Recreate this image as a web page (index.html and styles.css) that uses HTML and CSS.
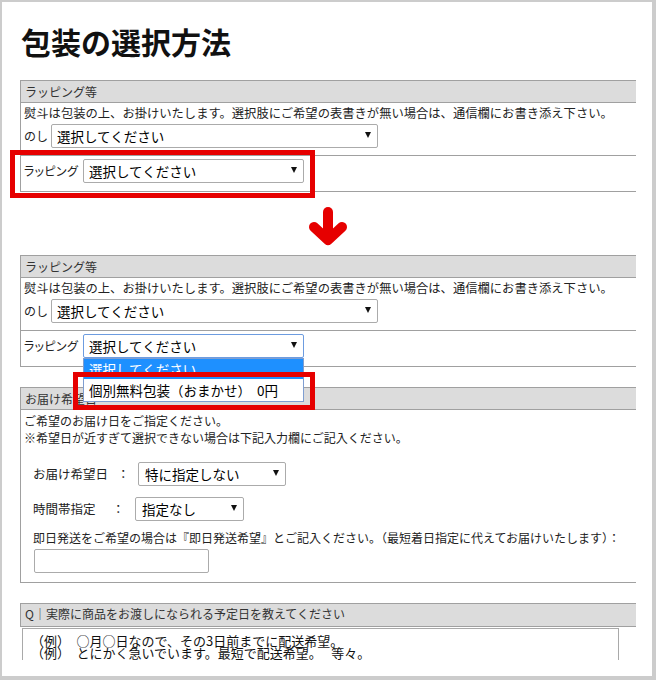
FILE: index.html
```html
<!DOCTYPE html>
<html lang="ja">
<head>
<meta charset="utf-8">
<title>包装の選択方法</title>
<link rel="stylesheet" href="styles.css">
</head>
<body>
<div class="frame">
  <div class="viewport">
    <h1 class="title">包装の選択方法</h1>

    <section class="box">
      <div class="box-head">ラッピング等</div>
      <div class="row row-noshi">
        <p class="note">熨斗は包装の上、お掛けいたします。選択肢にご希望の表書きが無い場合は、通信欄にお書き添え下さい。</p>
        <div class="field field-noshi">
          <span class="field-label label-noshi">のし</span>
          <div class="select select-noshi"><span class="select-value">選択してください</span></div>
        </div>
      </div>
      <div class="row row-wrap">
        <div class="field">
          <span class="field-label label-wrap">ラッピング</span>
          <div class="select select-wrap"><span class="select-value">選択してください</span></div>
        </div>
      </div>
    </section>

    <div class="arrow">
      <svg width="38" height="40" viewBox="0 0 38 40" aria-hidden="true">
        <path d="M19 6 V30" fill="none" stroke="#e60000" stroke-width="10" stroke-linecap="round"/>
        <path d="M5 21 L19 34 L33 21" fill="none" stroke="#e60000" stroke-width="10" stroke-linecap="round" stroke-linejoin="round"/>
      </svg>
    </div>

    <section class="box box-second">
      <div class="box-head">ラッピング等</div>
      <div class="row row-noshi">
        <p class="note">熨斗は包装の上、お掛けいたします。選択肢にご希望の表書きが無い場合は、通信欄にお書き添え下さい。</p>
        <div class="field field-noshi">
          <span class="field-label label-noshi">のし</span>
          <div class="select select-noshi"><span class="select-value">選択してください</span></div>
        </div>
      </div>
      <div class="row row-wrap">
        <div class="field">
          <span class="field-label label-wrap">ラッピング</span>
          <div class="select select-wrap is-open">
            <span class="select-value">選択してください</span>
            <div class="listbox">
              <div class="option is-selected">選択してください</div>
              <div class="option">個別無料包装（おまかせ）&nbsp;&nbsp;0円</div>
            </div>
          </div>
        </div>
      </div>
    </section>

    <section class="box box-delivery">
      <div class="box-head">お届け希望日</div>
      <div class="row row-delivery">
        <p class="intro">ご希望のお届け日をご指定ください。</p>
        <p class="intro">※希望日が近すぎて選択できない場合は下記入力欄にご記入ください。</p>
        <div class="field field-date">
          <span class="field-label label-date">お届け希望日</span>
          <span class="colon">：</span>
          <div class="select select-date"><span class="select-value">特に指定しない</span></div>
        </div>
        <div class="field field-time">
          <span class="field-label label-time">時間帯指定</span>
          <span class="colon">：</span>
          <div class="select select-time"><span class="select-value">指定なし</span></div>
        </div>
        <p class="express">即日発送をご希望の場合は『即日発送希望』とご記入ください。（最短着日指定に代えてお届けいたします）：</p>
        <input class="text-input" type="text" aria-label="即日発送希望">
      </div>
    </section>

    <section class="box box-q">
      <div class="box-head box-head-q">Q｜実際に商品をお渡しになられる予定日を教えてください</div>
      <textarea class="answer" aria-label="予定日">（例）　○月○日なので、その3日前までに配送希望。
（例）　とにかく急いでいます。最短で配送希望。　 等々。</textarea>
    </section>

    <div class="mark mark-1"></div>
    <div class="mark mark-2"></div>
  </div>
</div>
</body>
</html>
```

FILE: styles.css
```css
* {
  box-sizing: border-box;
}

html,
body {
  margin: 0;
  padding: 0;
  background: #ffffff;
}

body {
  font-family: "Noto Sans CJK JP", "Noto Sans", sans-serif;
  color: #222222;
}

.frame {
  width: 656px;
  height: 680px;
  border-style: solid;
  border-color: #cccccc;
  border-width: 2px 4px 4px 2px;
  padding-bottom: 16px;
  background: #ffffff;
}

.viewport {
  position: relative;
  height: 658px;
  overflow: hidden;
  padding: 19px 16px 0 18px;
}

.title {
  margin: 0;
  height: 40px;
  padding-left: 1px;
  font-size: 30px;
  line-height: 40px;
  font-weight: 700;
  color: #111111;
}

.box {
  margin-top: 19px;
  border-top: 1px solid #a0a0a0;
  border-bottom: 1px solid #a0a0a0;
  border-left: 1px solid #a0a0a0;
}

.box-second {
  margin-top: 0;
}

.box-delivery {
  margin-top: 20px;
}

.box-head {
  height: 22px;
  padding-left: 4px;
  border-bottom: 1px solid #a0a0a0;
  background: #dcdcdc;
  font-size: 12px;
  line-height: 21px;
  color: #333333;
  white-space: nowrap;
}

.row-noshi {
  height: 53px;
  padding: 2px 0 0 3px;
  border-bottom: 1px solid #a0a0a0;
}

.row-wrap {
  padding: 3px 0 8px 3px;
}

.note {
  margin: 0;
  font-size: 12.3px;
  line-height: 16px;
  white-space: nowrap;
}

.field {
  display: flex;
  align-items: center;
}

.field-noshi {
  margin-top: 3px;
}

.field-label {
  flex-shrink: 0;
  font-size: 12px;
  line-height: 16px;
  white-space: nowrap;
}

.label-noshi {
  width: 27px;
}

.label-wrap {
  width: 59px;
  font-feature-settings: "palt";
  letter-spacing: 0.3px;
}

.select {
  position: relative;
  flex-shrink: 0;
  height: 24px;
  padding-left: 5px;
  border: 1px solid #ababab;
  border-radius: 2px;
  background: #ffffff;
  font-size: 13.5px;
  line-height: 22px;
  color: #000000;
  white-space: nowrap;
}

.select::after {
  content: "";
  position: absolute;
  right: 6px;
  top: 7px;
  width: 0;
  height: 0;
  border-left: 3px solid transparent;
  border-right: 3px solid transparent;
  border-top: 6px solid #111111;
}

.select-noshi {
  width: 327px;
}

.select-wrap {
  width: 221px;
}

.select-wrap.is-open {
  border-color: #6d9ce0;
}

.listbox {
  position: absolute;
  z-index: 5;
  left: -1px;
  top: calc(100% + 1px);
  width: calc(100% + 2px);
  border: 1px solid #7f9ed1;
  background: #ffffff;
}

.option {
  height: 22px;
  padding-left: 5px;
  font-size: 13.5px;
  line-height: 22px;
  color: #000000;
}

.option.is-selected {
  height: 20px;
  line-height: 20px;
  background: #1e90ff;
  color: #ffffff;
}

.arrow {
  display: flex;
  justify-content: center;
  height: 63px;
  padding-top: 14px;
}

.arrow svg {
  display: block;
}

.row-delivery {
  padding: 2px 0 9px 3px;
}

.intro {
  margin: 0;
  font-size: 12px;
  line-height: 17px;
  white-space: nowrap;
}

.field-date {
  margin: 16px 0 0 9px;
}

.field-time {
  margin: 11px 0 0 9px;
}

.label-date,
.label-time {
  font-size: 12.5px;
}

.label-date {
  width: 84px;
}

.label-time {
  width: 79px;
}

.colon {
  flex-shrink: 0;
  width: 12.5px;
  font-size: 12.5px;
  line-height: 16px;
}

.select-date {
  width: 148px;
  margin-left: 8.5px;
  padding-left: 6px;
}

.select-time {
  width: 109px;
  margin-left: 10.5px;
  padding-left: 6px;
}

.express {
  margin: 9px 0 0 9px;
  font-size: 12px;
  line-height: 16px;
  white-space: nowrap;
}

.text-input {
  display: block;
  width: 175px;
  height: 24px;
  margin: 3px 0 0 10px;
  padding: 0 4px;
  border: 1px solid #ababab;
  border-radius: 2px;
  background: #ffffff;
  font: inherit;
}

.box-q {
  margin-top: 20px;
  border-left: none;
  border-bottom: none;
}

.box-head-q {
  height: 23px;
  border-left: 1px solid #a0a0a0;
  padding-left: 4px;
  line-height: 20px;
}

.answer {
  display: block;
  width: 597px;
  height: 60px;
  margin: 1px 0 0 2px;
  padding: 6px 8px 0 8px;
  border: 1px solid #a9a9a9;
  background: #ffffff;
  font-family: "Noto Sans CJK JP", "Noto Sans", sans-serif;
  font-size: 13px;
  line-height: 12px;
  color: #111111;
  resize: none;
  overflow: hidden;
  white-space: pre;
}

.mark {
  position: absolute;
  z-index: 10;
  border: 5px solid #e60000;
}

.mark-1 {
  left: 8px;
  top: 148px;
  width: 305px;
  height: 48px;
}

.mark-2 {
  left: 71px;
  top: 370px;
  width: 242px;
  height: 38px;
}
```
